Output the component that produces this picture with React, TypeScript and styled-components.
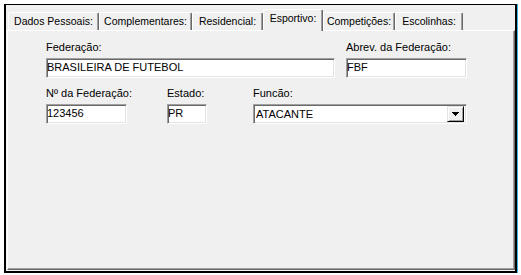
import * as React from "react";
import styled, { createGlobalStyle } from "styled-components";

const GlobalStyle = createGlobalStyle`
    html, body {
        margin: 0;
        padding: 0;
        background: #fff;
    }

    body {
        font-family: "Liberation Sans", Arial, sans-serif;
        font-size: 11px;
        color: #000;
    }
`;

type TabDef = { label: string; width: number };

const tabs: TabDef[] = [
    { label: "Dados Pessoais:", width: 91 },
    { label: "Complementares:", width: 93 },
    { label: "Residencial:", width: 71 },
    { label: "Esportivo:", width: 60 },
    { label: "Competições:", width: 72 },
    { label: "Escolinhas:", width: 68 },
];

const activeTab = 3;

const App = () => (
    <>
        <GlobalStyle />
        <Frame>
            <TabStrip>
                {tabs.map((t, i) => (
                    <Tab key={t.label} $width={t.width} $active={i === activeTab}>
                        {t.label}
                    </Tab>
                ))}
            </TabStrip>
            <Panel>
                <Row $gap={11}>
                    <Field $width={289}>
                        <Label>Federação:</Label>
                        <TextBox readOnly value="BRASILEIRA DE FUTEBOL" />
                    </Field>
                    <Field $width={121}>
                        <Label>Abrev. da Federação:</Label>
                        <TextBox readOnly value="FBF" />
                    </Field>
                </Row>
                <Row $gap={0}>
                    <Field $width={81}>
                        <Label>Nº da Federação:</Label>
                        <TextBox readOnly value="123456" />
                    </Field>
                    <Field $width={40} $offset={40}>
                        <Label>Estado:</Label>
                        <TextBox readOnly value="PR" />
                    </Field>
                    <Field $width={214} $offset={46}>
                        <Label>Funcão:</Label>
                        <Combo>
                            <ComboValue>ATACANTE</ComboValue>
                            <DropButton>
                                <svg width="7" height="4" viewBox="0 0 7 4">
                                    <path d="M0 0h7v1H6v1H5v1H4v1H3V3H2V2H1V1H0z" fill="#000" />
                                </svg>
                            </DropButton>
                        </Combo>
                    </Field>
                </Row>
            </Panel>
        </Frame>
    </>
);

export default App;

const Frame = styled.div`
    box-sizing: border-box;
    width: 513px;
    height: 269px;
    margin: 4px 0 0 4px;

    display: flex;
    flex-direction: column;

    padding: 0 0 1px 1px;

    background: #f0f0f0;
    border-style: solid;
    border-color: #000;
    border-width: 1px 2px 2px 2px;
    box-shadow: 1px 0 0 #3cb4e6;
`;

const TabStrip = styled.div`
    display: flex;
    align-items: flex-end;

    height: 25px;
    padding-left: 1px;

    flex-shrink: 0;
`;

const Tab = styled.div<{ $width: number; $active?: boolean }>`
    position: relative;
    z-index: ${(p) => (p.$active ? 2 : 0)};

    box-sizing: border-box;
    width: ${(p) => p.$width}px;
    height: ${(p) => (p.$active ? 22 : 18)}px;
    margin-bottom: ${(p) => (p.$active ? -1 : 0)}px;

    font-size: 10.5px;
    text-align: center;
    line-height: 17px;
    white-space: nowrap;

    background: #f0f0f0;
    border-top: 1px solid #fff;
    border-left: 1px solid #fff;
    border-right: 1px solid #696969;
    box-shadow: inset -1px 0 0 #a0a0a0;
    border-radius: 2px 2px 0 0;
`;

const Panel = styled.div`
    position: relative;
    z-index: 1;

    box-sizing: border-box;
    flex: 1;

    display: flex;
    flex-direction: column;
    gap: 9px;

    padding: 10px 0 0 38px;

    border-style: solid;
    border-width: 1px;
    border-color: #fff #696969 #696969 #fff;
    box-shadow: inset -1px -1px 0 #a0a0a0;
`;

const Row = styled.div<{ $gap: number }>`
    display: flex;
    gap: ${(p) => p.$gap}px;
`;

const Field = styled.div<{ $width: number; $offset?: number }>`
    display: flex;
    flex-direction: column;

    width: ${(p) => p.$width}px;
    margin-left: ${(p) => p.$offset ?? 0}px;
`;

const Label = styled.div`
    height: 13px;
    margin-bottom: 4px;

    line-height: 13px;
    white-space: nowrap;
`;

const TextBox = styled.input`
    box-sizing: border-box;
    width: 100%;
    height: 20px;
    margin: 0;
    padding: 0 0 2px 0;

    font-family: "Liberation Sans", Arial, sans-serif;
    font-size: 11px;
    color: #000;

    background: #fff;
    border-style: solid;
    border-width: 1px;
    border-color: #a0a0a0 #fff #fff #a0a0a0;
    box-shadow: inset 1px 1px 0 #696969, inset -1px -1px 0 #e3e3e3;
    outline: none;
`;

const Combo = styled.div`
    box-sizing: border-box;
    width: 100%;
    height: 20px;

    display: flex;
    align-items: center;
    justify-content: space-between;

    padding: 2px;

    background: #fff;
    border-style: solid;
    border-width: 1px;
    border-color: #a0a0a0 #fff #fff #a0a0a0;
    box-shadow: inset 1px 1px 0 #696969, inset -1px -1px 0 #e3e3e3;
`;

const ComboValue = styled.span`
    margin-top: -1px;

    line-height: 14px;
`;

const DropButton = styled.div`
    box-sizing: border-box;
    width: 17px;
    height: 16px;

    display: flex;
    align-items: center;
    justify-content: center;

    background: #f0f0f0;
    border-style: solid;
    border-width: 1px;
    border-color: #e3e3e3 #000 #000 #e3e3e3;
    box-shadow: inset 1px 1px 0 #fff, inset -1px -1px 0 #a0a0a0;
`;
